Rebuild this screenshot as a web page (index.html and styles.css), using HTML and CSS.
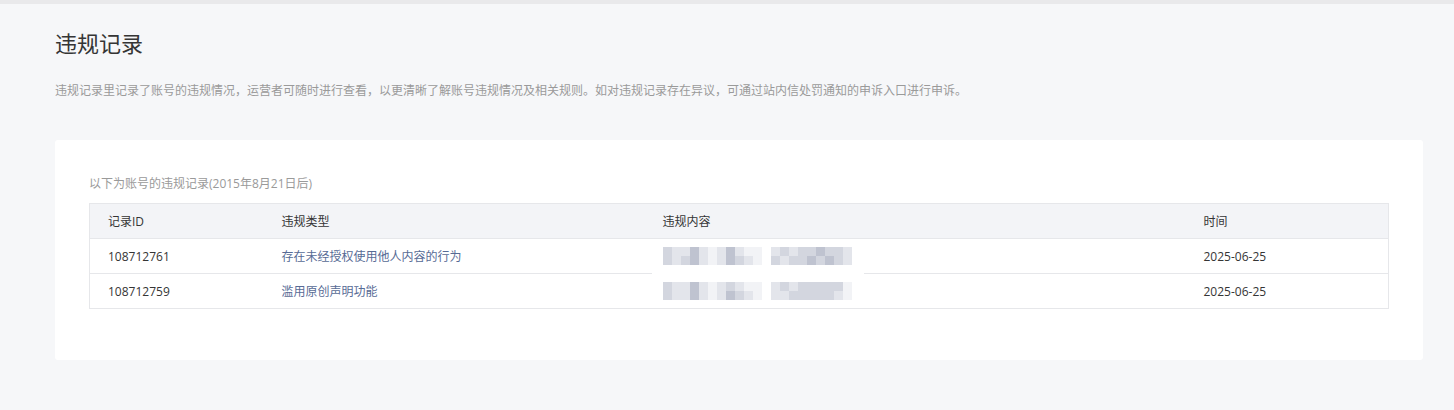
FILE: index.html
```html
<!DOCTYPE html>
<html lang="zh-CN">
<head>
<meta charset="utf-8">
<title>违规记录</title>
<link rel="stylesheet" href="styles.css">
</head>
<body>
<div class="topbar"></div>
<main class="page">
  <h1 class="title">违规记录</h1>
  <p class="desc">违规记录里记录了账号的违规情况，运营者可随时进行查看，以更清晰了解账号违规情况及相关规则。如对违规记录存在异议，可通过站内信处罚通知的申诉入口进行申诉。</p>
  <section class="card">
    <p class="caption">以下为账号的违规记录(2015年8月21日后)</p>
    <div class="table-wrap">
      <table class="table">
        <colgroup>
          <col class="c1"><col class="c2"><col class="c3"><col class="c4">
        </colgroup>
        <thead>
          <tr><th>记录ID</th><th>违规类型</th><th>违规内容</th><th>时间</th></tr>
        </thead>
        <tbody>
          <tr>
            <td>108712761</td>
            <td><a class="link">存在未经授权使用他人内容的行为</a></td>
            <td>
              <span class="mosaic">
                <span class="grp g1">
                  <i class="m2"></i><i class="m1"></i><i class="m1"></i><i class="m3"></i><i class="m1"></i><i class="m0"></i><i class="m1"></i><i class="m3"></i><i class="m1"></i><i class="m0"></i><i class="m0"></i>
                  <i class="m2"></i><i class="m1"></i><i class="m2"></i><i class="m3"></i><i class="m1"></i><i class="m0"></i><i class="m1"></i><i class="m3"></i><i class="m2"></i><i class="m1"></i><i class="m0"></i>
                </span>
                <span class="grp g2">
                  <i class="m1"></i><i class="m2"></i><i class="m1"></i><i class="m2"></i><i class="m2"></i><i class="m3"></i><i class="m2"></i><i class="m2"></i><i class="m1"></i>
                  <i class="m2"></i><i class="m1"></i><i class="m2"></i><i class="m2"></i><i class="m3"></i><i class="m2"></i><i class="m3"></i><i class="m2"></i><i class="m1"></i>
                </span>
              </span>
            </td>
            <td>2025-06-25</td>
          </tr>
          <tr>
            <td>108712759</td>
            <td><a class="link">滥用原创声明功能</a></td>
            <td>
              <span class="mosaic">
                <span class="grp g1">
                  <i class="m2"></i><i class="m1"></i><i class="m1"></i><i class="m3"></i><i class="m1"></i><i class="m0"></i><i class="m1"></i><i class="m2"></i><i class="m1"></i><i class="m0"></i><i class="m0"></i>
                  <i class="m2"></i><i class="m1"></i><i class="m1"></i><i class="m3"></i><i class="m1"></i><i class="m0"></i><i class="m1"></i><i class="m3"></i><i class="m2"></i><i class="m1"></i><i class="m0"></i>
                </span>
                <span class="grp g2">
                  <i class="m1"></i><i class="m2"></i><i class="m1"></i><i class="m2"></i><i class="m2"></i><i class="m2"></i><i class="m2"></i><i class="m2"></i><i class="m0"></i>
                  <i class="m1"></i><i class="m1"></i><i class="m2"></i><i class="m2"></i><i class="m2"></i><i class="m2"></i><i class="m2"></i><i class="m1"></i><i class="m0"></i>
                </span>
              </span>
            </td>
            <td>2025-06-25</td>
          </tr>
        </tbody>
      </table>
      <div class="blot"></div>
    </div>
  </section>
</main>
</body>
</html>
```

FILE: styles.css
```css
* { box-sizing: border-box; }
html, body { margin: 0; padding: 0; }
body {
  background: #f6f7f9;
  font-family: "Open Sans", "Noto Sans CJK SC", "Microsoft YaHei", sans-serif;
  color: #333;
}
.topbar {
  height: 4px;
  background: #e9e9eb;
}
.page {
  padding: 23px 31px 50px 55px;
}
.title {
  margin: 0;
  font-family: "Noto Sans CJK SC", sans-serif;
  font-size: 22px;
  line-height: 30px;
  font-weight: 400;
  color: #353535;
}
.desc {
  margin: 25px 0 0 0;
  font-size: 12px;
  line-height: 18px;
  color: #9a9a9a;
}
.card {
  margin-top: 40px;
  background: #fff;
  border-radius: 3px;
  padding: 35px 34px 51px 34px;
}
.caption {
  margin: 0;
  font-size: 12px;
  line-height: 18px;
  color: #9a9a9a;
}
.table-wrap {
  position: relative;
  margin-top: 10px;
}
.table {
  width: 100%;
  table-layout: fixed;
  border-collapse: collapse;
  border: 1px solid #e6e7ea;
  font-size: 12px;
}
.c1 { width: 174px; }
.c2 { width: 381px; }
.c3 { width: 541px; }
.c4 { width: auto; }
.table th {
  background: #f3f4f7;
  font-weight: 400;
  text-align: left;
  height: 35px;
  padding: 0 0 0 18px;
  color: #353535;
  border-bottom: 1px solid #e6e7ea;
}
.table td {
  height: 35px;
  padding: 0 0 0 18px;
  color: #353535;
  border-bottom: 1px solid #e6e7ea;
}
.link {
  color: #576b95;
  text-decoration: none;
}
.mosaic {
  position: relative;
  z-index: 2;
  display: flex;
  gap: 9px;
  align-items: flex-start;
}
.grp {
  display: grid;
  grid-auto-rows: 9px;
}
.g1 { grid-template-columns: repeat(11, 9px); }
.g2 { grid-template-columns: repeat(9, 9px); }
.grp i { display: block; }
.m0 { background: #f2f3f6; }
.m1 { background: #e3e5eb; }
.m2 { background: #d3d6df; }
.m3 { background: #bfc3d0; }
.blot {
  position: absolute;
  left: 563px;
  top: 36px;
  width: 212px;
  height: 69px;
  background: #fff;
  border-radius: 14px;
  z-index: 1;
}
```
